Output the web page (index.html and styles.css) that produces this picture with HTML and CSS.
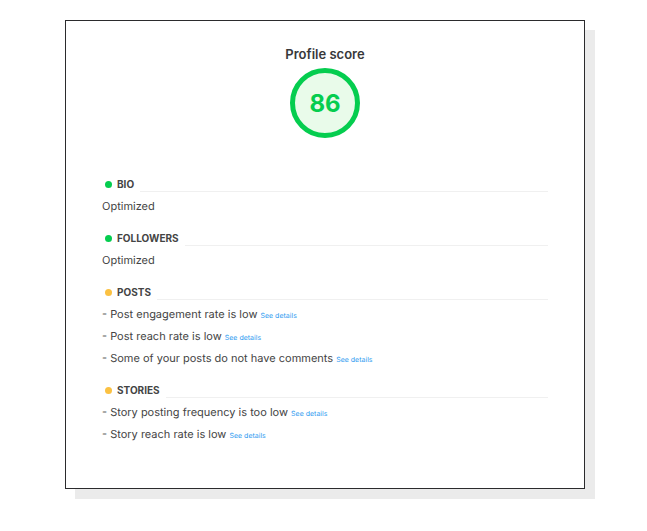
FILE: index.html
```html
<!DOCTYPE html>
<html lang="en">
<head>
    <meta charset="UTF-8">
    <meta name="viewport" content="width=device-width, initial-scale=1.0">
    <title>Profile score</title>
    <link rel="stylesheet" href="styles.css">
</head>
<body>
    <main class="card">
        <div class="score">
            <h1>Profile score</h1>
            <div class="score-circle">86</div>
        </div>
        <section class="group">
            <h2><span class="dot good"></span>BIO</h2>
            <p>Optimized</p>
        </section>
        <section class="group">
            <h2><span class="dot good"></span>FOLLOWERS</h2>
            <p>Optimized</p>
        </section>
        <section class="group">
            <h2><span class="dot warning"></span>POSTS</h2>
            <p>- Post engagement rate is low <a href="#">See details</a></p>
            <p>- Post reach rate is low <a href="#">See details</a></p>
            <p>- Some of your posts do not have comments <a href="#">See details</a></p>
        </section>
        <section class="group">
            <h2><span class="dot warning"></span>STORIES</h2>
            <p>- Story posting frequency is too low <a href="#">See details</a></p>
            <p>- Story reach rate is low <a href="#">See details</a></p>
        </section>
    </main>
</body>
</html>
```

FILE: styles.css
```css
body {
    margin: 0;
    padding: 20px 62px 42px 65px;
    background-color: #fff;
    font-family: Inter, "Liberation Sans", sans-serif;
    font-size: 11px;
    color: #444;
}
.card {
    padding: 24px 36px 43px;
    border: 1px solid #2b2b2d;
    background-color: #fff;
    box-shadow: 10px 10px 0 #ebebeb;
}
.score {
    display: flex;
    flex-direction: column;
    align-items: center;
    margin-bottom: 38px;
}
.score h1 {
    margin: 0 0 5px;
    font-size: 13px;
    line-height: 18px;
    font-weight: 600;
    color: #38383a;
}
.score-circle {
    display: flex;
    justify-content: center;
    align-items: center;
    box-sizing: border-box;
    width: 70px;
    height: 70px;
    border: 5px solid #05cd4f;
    border-radius: 50%;
    background-color: #e9fbea;
    font-size: 24px;
    font-weight: 700;
    color: #05cd4f;
}
.group {
    margin-bottom: 13px;
}
.group:last-child {
    margin-bottom: 0;
}
.group h2 {
    display: flex;
    align-items: center;
    margin: 0 0 3px;
    font-size: 10px;
    line-height: 16px;
    font-weight: 700;
    color: #444;
}
.group h2::after {
    content: "";
    flex: 1;
    align-self: flex-end;
    margin-left: 6px;
    border-bottom: 1px solid #f0f0f0;
}
.dot {
    width: 7px;
    height: 7px;
    margin: 0 5px 0 3px;
    border-radius: 50%;
}
.dot.good {
    background-color: #05cd4f;
}
.dot.warning {
    background-color: #fbc142;
}
.group p {
    margin: 0;
    line-height: 22px;
    text-rendering: geometricPrecision;
}
.group a {
    font-size: 7px;
    line-height: 1;
    color: #2f9bf0;
    text-decoration: none;
}
```
